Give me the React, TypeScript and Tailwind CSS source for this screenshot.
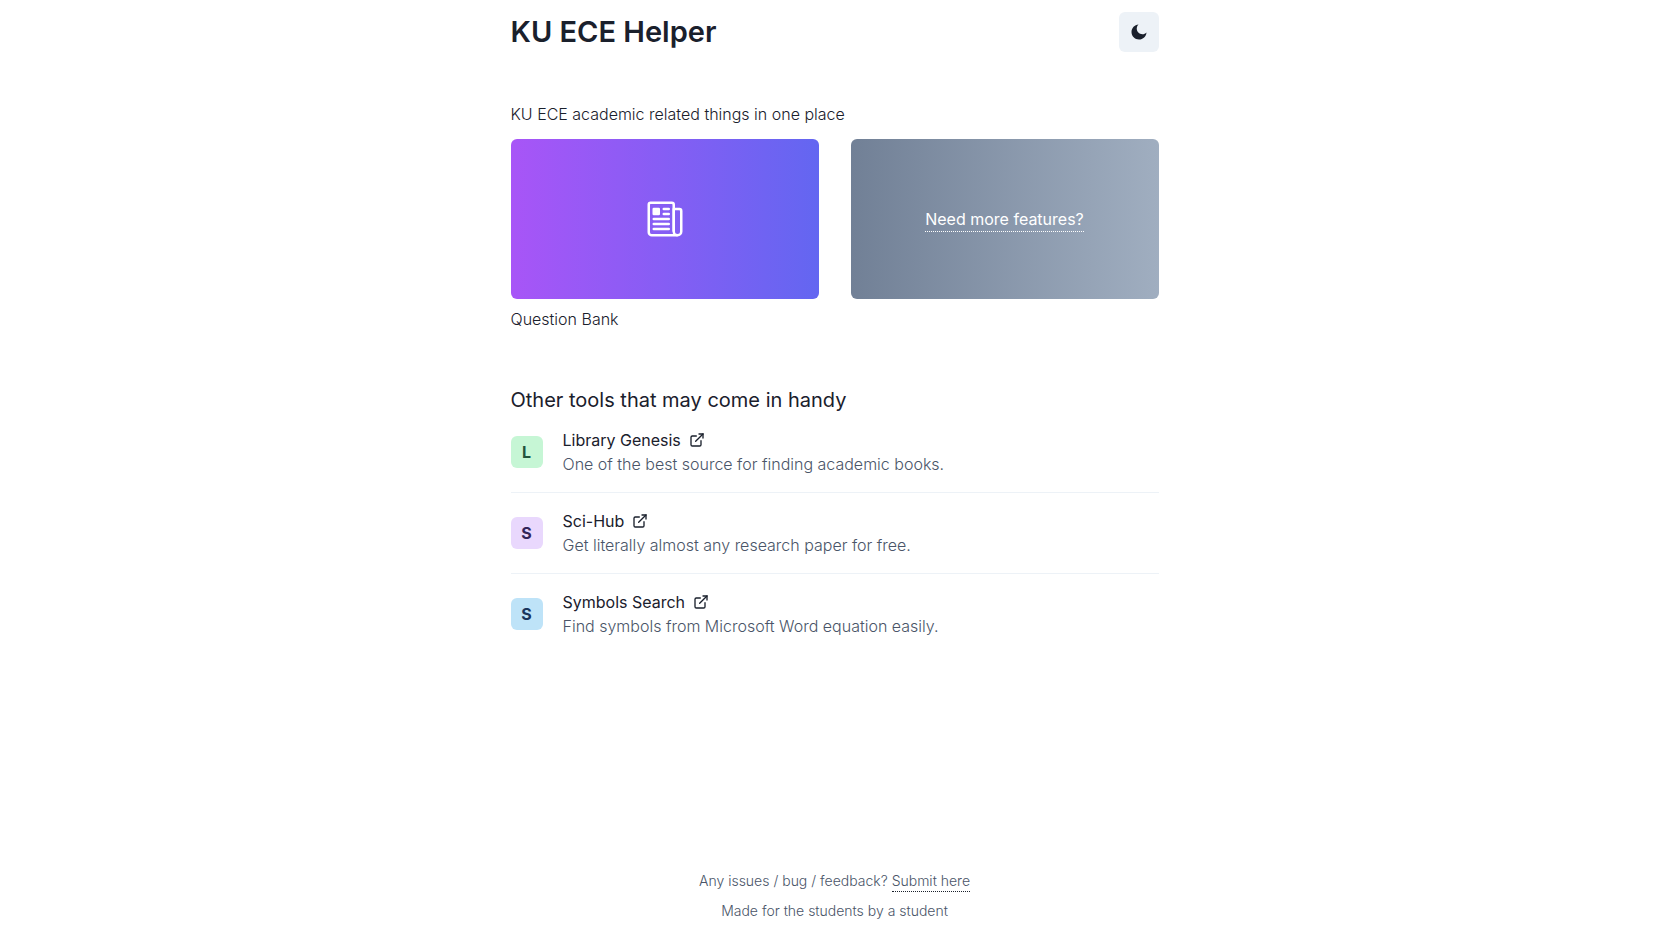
import React from "react";
import { IoNewspaperOutline } from "react-icons/io5";
import { RiMoonFill } from "react-icons/ri";

const tools = [
  { name: "Library Genesis", text: "One of the best source for finding academic books.", badge: "bg-[#c6f6d5] text-[#22543d]" },
  { name: "Sci-Hub", text: "Get literally almost any research paper for free.", badge: "bg-[#e9d8fd] text-[#322659]" },
  { name: "Symbols Search", text: "Find symbols from Microsoft Word equation easily.", badge: "bg-[#bee3f8] text-[#1a365d]" },
];

function ExternalLinkIcon() {
  return (
    <svg viewBox="0 0 24 24" className="size-4" fill="none" stroke="currentColor" strokeWidth="2" strokeLinecap="round" aria-hidden="true">
      <path d="M18 13v6a2 2 0 0 1-2 2H5a2 2 0 0 1-2-2V8a2 2 0 0 1 2-2h6" />
      <path d="M15 3h6v6" />
      <path d="M10 14L21 3" />
    </svg>
  );
}

export default function App() {
  return (
    <div className="flex min-h-screen flex-col bg-white px-4 font-['Inter','Liberation_Sans',sans-serif] text-base text-[#1a202c]">
      <div className="mx-auto flex w-full max-w-[648px] grow flex-col">
        <header className="flex items-center justify-between pt-3">
          <h1 className="text-[29px] leading-10 font-semibold">KU ECE Helper</h1>
          <button type="button" aria-label="Toggle dark mode" className="flex size-10 items-center justify-center rounded-md bg-[#edf2f7]">
            <RiMoonFill className="size-[18px]" />
          </button>
        </header>

        <main className="grow">
          <section className="pt-[50px]">
            <p className="pb-[13px] font-light">KU ECE academic related things in one place</p>
            <div className="grid grid-cols-2 gap-8">
              <a href="#question-bank" className="block">
                <span className="flex h-40 items-center justify-center rounded-md bg-linear-to-r/srgb from-[#a855f7] to-[#6366f1] text-white">
                  <IoNewspaperOutline className="size-10" />
                </span>
                <span className="block pt-2 font-light">Question Bank</span>
              </a>
              <div className="flex h-40 items-center justify-center rounded-md bg-linear-to-r/srgb from-[#718096] to-[#a0aec0]">
                <a href="#features" className="border-b border-dotted border-white text-white">Need more features?</a>
              </div>
            </div>
          </section>

          <section className="pt-[53px]">
            <h2 className="text-xl leading-8">Other tools that may come in handy</h2>
            <ul className="divide-y divide-[#edf2f7]">
              {tools.map((tool) => (
                <li key={tool.name} className="flex items-center gap-5 py-4 first:pt-3">
                  <span className={`flex size-8 items-center justify-center rounded-md font-bold ${tool.badge}`}>{tool.name[0]}</span>
                  <div>
                    <a href="#tool" className="flex items-center gap-2">
                      {tool.name}
                      <ExternalLinkIcon />
                    </a>
                    <p className="font-light text-[#4a5568]">{tool.text}</p>
                  </div>
                </li>
              ))}
            </ul>
          </section>
        </main>

        <footer className="flex flex-col items-center gap-[9px] pb-4 text-sm font-light text-[#4a5568]">
          <p>
            Any issues / bug / feedback?{" "}
            <a href="#feedback" className="inline-block border-b border-dotted border-[#1a202c]">Submit here</a>
          </p>
          <p>Made for the students by a student</p>
        </footer>
      </div>
    </div>
  );
}
